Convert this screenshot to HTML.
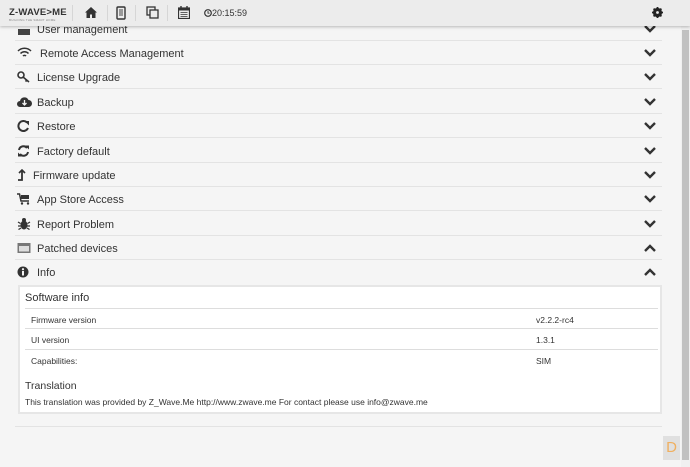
<!DOCTYPE html>
<html><head><meta charset="utf-8"><style>
*{box-sizing:border-box;margin:0;padding:0}
body{width:690px;height:467px;overflow:hidden;background:#f5f5f5;font-family:"Liberation Sans",Arial,sans-serif;color:#333;position:relative}
.hdr{position:absolute;left:0;top:0;width:690px;height:26px;background:#ececec;box-shadow:0 1px 3px rgba(0,0,0,.25);z-index:5}
.logo{position:absolute;left:9px;top:7px;font-size:9.5px;font-weight:bold;letter-spacing:.2px;color:#333}
.logo small{position:absolute;left:0;top:11px;font-size:3px;color:#888;font-weight:normal;white-space:nowrap}
.sep{position:absolute;top:5px;width:1px;height:16px;background:#d6d6d6}
.time{position:absolute;left:212px;top:8px;font-size:9px;color:#333}
.sb{position:absolute;left:681px;top:26px;width:9px;height:441px;background:#f0f0f0}
.sb i{position:absolute;left:1px;top:4px;width:7px;height:430px;background:#c1c1c1}
.row{position:absolute;left:15px;width:647px;height:24px;border-bottom:1px solid #e3e3e3;font-size:11px;color:#333}
.row span{position:absolute;left:22px;top:7px}
.row svg.ic{position:absolute;left:2px;top:6px}
.row svg.ch{position:absolute;left:629px;top:8px}
.panel{position:absolute;left:18px;top:285px;width:644px;height:129px;background:#fff;border:2px solid #e6e6e6}
.panel .t{position:absolute;left:5px;font-size:11px;color:#333}
.panel .r{position:absolute;left:5px;width:633px;border-top:1px solid #ddd;font-size:8.5px;color:#333;height:20px}
.panel .r b{font-weight:normal;position:absolute;left:6px;top:6px}
.panel .r em{font-style:normal;position:absolute;left:511px;top:6px}
</style></head><body>
<div class="hdr">
 <div class="logo">Z-WAVE&gt;ME<small>BUILDING THE SMART HOME</small></div>
 <div class="sep" style="left:72px"></div>
 <svg style="position:absolute;left:85px;top:7px" width="12" height="11" viewBox="0 0 12 11"><path d="M6 0L0 5.5h1.5V11h3.5V7.5h2V11h3.5V5.5H12z" fill="#333"/></svg>
 <div class="sep" style="left:107px"></div>
 <svg style="position:absolute;left:116px;top:6px" width="10" height="14" viewBox="0 0 10 14"><rect x="1" y="1" width="8" height="12" rx="1" fill="none" stroke="#333" stroke-width="1.4"/><rect x="3" y="3" width="4" height="7" fill="#999"/></svg>
 <div class="sep" style="left:135px"></div>
 <svg style="position:absolute;left:146px;top:6px" width="13" height="13" viewBox="0 0 13 13"><rect x="1" y="1" width="8" height="8" fill="none" stroke="#333" stroke-width="1.3"/><rect x="4" y="4" width="8" height="8" fill="#ececec" stroke="#333" stroke-width="1.3"/></svg>
 <div class="sep" style="left:167px"></div>
 <svg style="position:absolute;left:178px;top:6px" width="12" height="13" viewBox="0 0 12 13"><rect x="0.5" y="2" width="11" height="10.5" fill="none" stroke="#333" stroke-width="1.2"/><rect x="0.5" y="2" width="11" height="2.5" fill="#333"/><path d="M3 0v3M9 0v3" stroke="#333" stroke-width="1.4"/><path d="M2.5 6.5h7M2.5 8.5h7M2.5 10.5h7" stroke="#333" stroke-width=".8"/></svg>
 <svg style="position:absolute;left:204px;top:9px" width="8" height="8" viewBox="0 0 8 8"><circle cx="4" cy="4" r="3.3" fill="none" stroke="#333" stroke-width="1.2"/><path d="M4 2v2.2h1.5" fill="none" stroke="#333" stroke-width=".9"/></svg>
 <div class="time">20:15:59</div>
 <svg style="position:absolute;left:652px;top:7px" width="11" height="11" viewBox="0 0 11 11"><circle cx="5.5" cy="5.5" r="3.5" fill="none" stroke="#222" stroke-width="2.2"/><path d="M5.5 0v11M0 5.5h11M1.6 1.6l7.8 7.8M9.4 1.6l-7.8 7.8" stroke="#222" stroke-width="1.8"/><circle cx="5.5" cy="5.5" r="1.4" fill="#ececec"/></svg>
</div>

<div class="row" style="top:17px"><svg class="ic" width="14" height="12"><path d="M1 6h12v6H1z" fill="#444"/></svg><span>User management</span><svg class="ch" width="12" height="8" viewBox="0 0 12 8"><path d="M1 1l5 5 5-5" fill="none" stroke="#333" stroke-width="2.4"/></svg></div>
<div class="row" style="top:41px"><svg class="ic" width="15" height="12" viewBox="0 0 15 12"><path d="M1 4a9 9 0 0 1 13 0M3.5 6.5a5.5 5.5 0 0 1 8 0M6 9a2 2 0 0 1 3 0" fill="none" stroke="#333" stroke-width="1.5"/></svg><span style="left:25px">Remote Access Management</span><svg class="ch" width="12" height="8" viewBox="0 0 12 8"><path d="M1 1l5 5 5-5" fill="none" stroke="#333" stroke-width="2.4"/></svg></div>
<div class="row" style="top:65px"><svg class="ic" width="14" height="12" viewBox="0 0 14 12"><circle cx="4" cy="4" r="3" fill="none" stroke="#333" stroke-width="1.6"/><path d="M6 6l6 5M10 9l-1.5 1.5" stroke="#333" stroke-width="1.6"/></svg><span>License Upgrade</span><svg class="ch" width="12" height="8" viewBox="0 0 12 8"><path d="M1 1l5 5 5-5" fill="none" stroke="#333" stroke-width="2.4"/></svg></div>
<div class="row" style="top:90px"><svg class="ic" width="15" height="12" viewBox="0 0 15 12"><path d="M3 11a3 3 0 0 1 0-6a4.5 4.5 0 0 1 8.5-1a3.5 3.5 0 0 1 0 7z" fill="#333"/><path d="M7.5 4v5M5.5 7l2 2 2-2" stroke="#f5f5f5" stroke-width="1.3" fill="none"/></svg><span>Backup</span><svg class="ch" width="12" height="8" viewBox="0 0 12 8"><path d="M1 1l5 5 5-5" fill="none" stroke="#333" stroke-width="2.4"/></svg></div>
<div class="row" style="top:114px"><svg class="ic" width="13" height="12" viewBox="0 0 13 12"><path d="M10 2.5A5 5 0 1 0 11 8" fill="none" stroke="#333" stroke-width="2"/><path d="M7.5 1h4.5v4.5z" fill="#333"/></svg><span>Restore</span><svg class="ch" width="12" height="8" viewBox="0 0 12 8"><path d="M1 1l5 5 5-5" fill="none" stroke="#333" stroke-width="2.4"/></svg></div>
<div class="row" style="top:139px"><svg class="ic" width="13" height="12" viewBox="0 0 13 12"><path d="M2 5a4.5 4.5 0 0 1 8-2M11 7a4.5 4.5 0 0 1-8 2" fill="none" stroke="#333" stroke-width="2"/><path d="M8 0.5h4v4zM5 11.5H1v-4z" fill="#333"/></svg><span>Factory default</span><svg class="ch" width="12" height="8" viewBox="0 0 12 8"><path d="M1 1l5 5 5-5" fill="none" stroke="#333" stroke-width="2.4"/></svg></div>
<div class="row" style="top:163px"><svg class="ic" width="10" height="12" viewBox="0 0 10 12"><path d="M5 1v10H1" fill="none" stroke="#333" stroke-width="1.8"/><path d="M2 4l3-3 3 3" fill="none" stroke="#333" stroke-width="1.6"/></svg><span style="left:18px">Firmware update</span><svg class="ch" width="12" height="8" viewBox="0 0 12 8"><path d="M1 1l5 5 5-5" fill="none" stroke="#333" stroke-width="2.4"/></svg></div>
<div class="row" style="top:187px"><svg class="ic" width="14" height="12" viewBox="0 0 14 12"><path d="M0 1h2.5l1.5 7h8" fill="none" stroke="#333" stroke-width="1.5"/><rect x="4" y="2" width="8" height="4" fill="#333"/><circle cx="5" cy="10.5" r="1.2" fill="#333"/><circle cx="11" cy="10.5" r="1.2" fill="#333"/></svg><span>App Store Access</span><svg class="ch" width="12" height="8" viewBox="0 0 12 8"><path d="M1 1l5 5 5-5" fill="none" stroke="#333" stroke-width="2.4"/></svg></div>
<div class="row" style="top:212px"><svg class="ic" width="14" height="12" viewBox="0 0 14 12"><ellipse cx="7" cy="7" rx="3.5" ry="4.5" fill="#333"/><circle cx="7" cy="2" r="2" fill="#333"/><path d="M1 4l2.5 1.5M13 4l-2.5 1.5M1 8h3M13 8h-3M1.5 11.5l2.5-1.5M12.5 11.5L10 10" stroke="#333" stroke-width="1.3"/></svg><span>Report Problem</span><svg class="ch" width="12" height="8" viewBox="0 0 12 8"><path d="M1 1l5 5 5-5" fill="none" stroke="#333" stroke-width="2.4"/></svg></div>
<div class="row" style="top:236px"><svg class="ic" width="14" height="12" viewBox="0 0 14 12"><rect x="0.5" y="1" width="13" height="10" fill="#777"/><rect x="2" y="4" width="10" height="5.5" fill="#ddd"/></svg><span>Patched devices</span><svg class="ch" width="12" height="8" viewBox="0 0 12 8"><path d="M1 7l5-5 5 5" fill="none" stroke="#333" stroke-width="2.4"/></svg></div>
<div class="row" style="top:260px;border-bottom:none"><svg class="ic" width="12" height="12" viewBox="0 0 12 12"><circle cx="6" cy="6" r="5.5" fill="#333"/><rect x="5" y="5" width="2" height="4.5" fill="#f5f5f5"/><circle cx="6" cy="3.2" r="1.1" fill="#f5f5f5"/></svg><span>Info</span><svg class="ch" width="12" height="8" viewBox="0 0 12 8"><path d="M1 7l5-5 5 5" fill="none" stroke="#333" stroke-width="2.4"/></svg></div>

<div class="panel">
 <div class="t" style="top:5px">Software info</div>
 <div class="r" style="top:21px"><b>Firmware version</b><em>v2.2.2-rc4</em></div>
 <div class="r" style="top:41px"><b>UI version</b><em>1.3.1</em></div>
 <div class="r" style="top:62px"><b>Capabilities:</b><em>SIM</em></div>
 <div class="t" style="top:93px;font-size:10.5px">Translation</div>
 <div class="t" style="top:110px;font-size:8.5px">This translation was provided by Z_Wave.Me http://www.zwave.me For contact please use info@zwave.me</div>
</div>
<div style="position:absolute;left:15px;top:426px;width:647px;height:1px;background:#e3e3e3"></div>
<div style="position:absolute;left:663px;top:436px;width:17px;height:24px;background:#e0e0e0;color:#f0b060;font-size:15px;text-align:center;line-height:24px">D</div>
<div class="sb"><i></i></div>
</body></html>
